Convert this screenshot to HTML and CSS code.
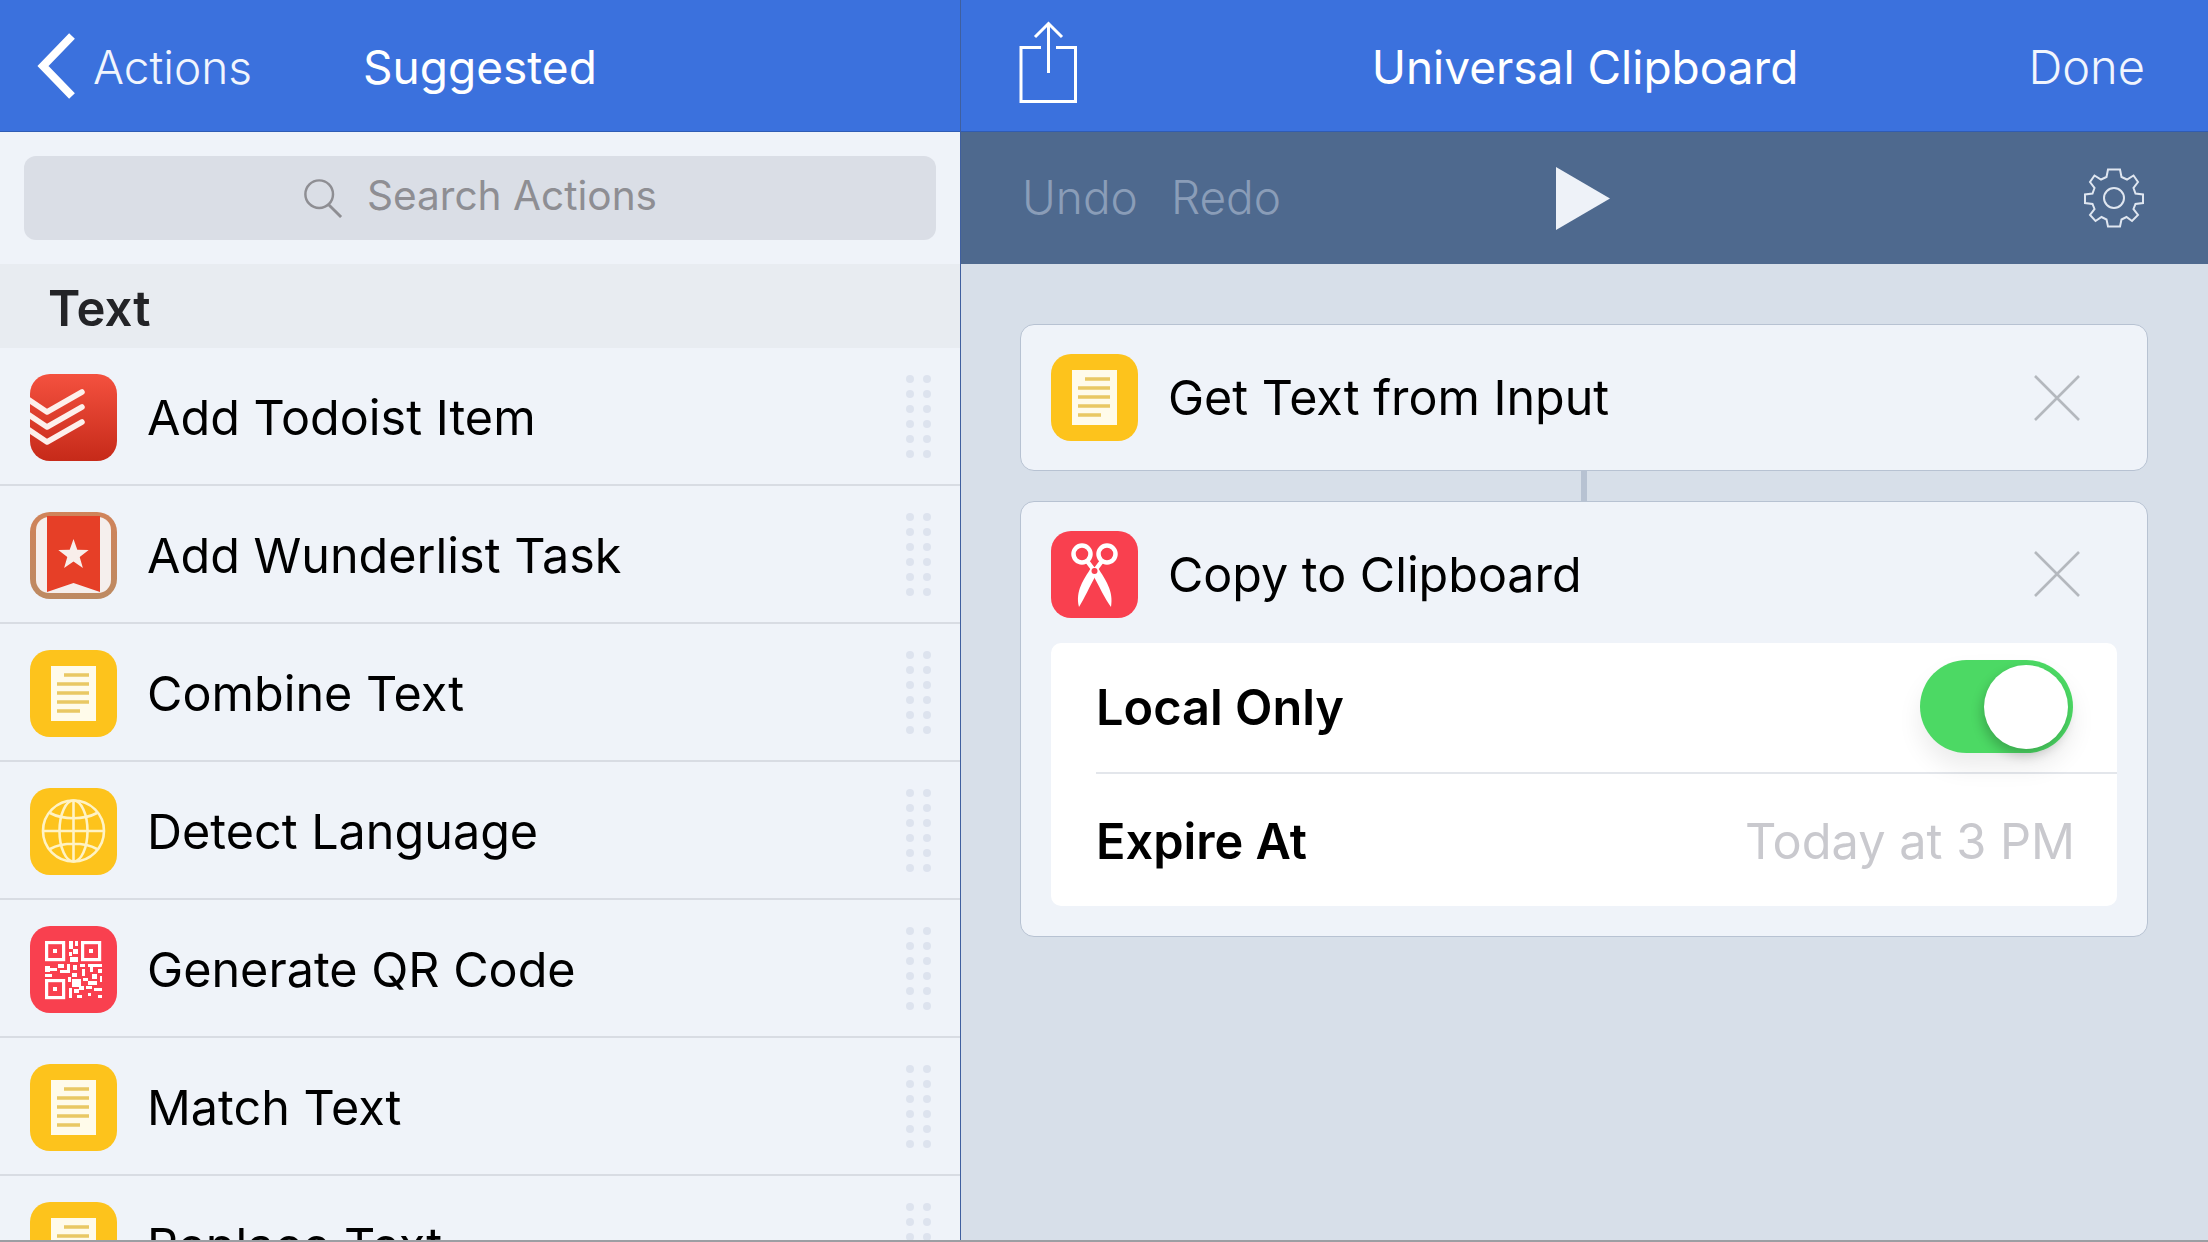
FILE: index.html
```html
<!DOCTYPE html>
<html lang="en">
<head>
<meta charset="utf-8">
<title>Universal Clipboard</title>
<link rel="stylesheet" href="styles.css">
</head>
<body>
<svg class="defs" width="0" height="0" aria-hidden="true">
  <defs>
    <symbol id="note" viewBox="0 0 87 87">
      <rect width="87" height="87" rx="20" fill="#fdc31c"/>
      <rect x="21" y="16" width="45" height="55" fill="#fffbea"/>
      <path d="M34 25H59M27 34H59M27 43H59M27 52H59M27 61H50" stroke="#e9c863" stroke-width="3.4" fill="none"/>
    </symbol>
    <symbol id="handle" viewBox="0 0 25 83">
      <g fill="#dde3ee">
        <rect x="0" y="0" width="8" height="8" rx="4"/><rect x="17" y="0" width="8" height="8" rx="4"/>
        <rect x="0" y="15" width="8" height="8" rx="4"/><rect x="17" y="15" width="8" height="8" rx="4"/>
        <rect x="0" y="30" width="8" height="8" rx="4"/><rect x="17" y="30" width="8" height="8" rx="4"/>
        <rect x="0" y="45" width="8" height="8" rx="4"/><rect x="17" y="45" width="8" height="8" rx="4"/>
        <rect x="0" y="60" width="8" height="8" rx="4"/><rect x="17" y="60" width="8" height="8" rx="4"/>
        <rect x="0" y="75" width="8" height="8" rx="4"/><rect x="17" y="75" width="8" height="8" rx="4"/>
      </g>
    </symbol>
    <symbol id="cross" viewBox="0 0 46 46">
      <path d="M1 1L45 45M45 1L1 45" stroke="#b4b8be" stroke-width="2.6" fill="none"/>
    </symbol>
    <linearGradient id="todo" x1="0" y1="0" x2="0" y2="1">
      <stop offset="0" stop-color="#f4513f"/><stop offset="1" stop-color="#c62a19"/>
    </linearGradient>
    <linearGradient id="wood" x1="0" y1="0" x2="0" y2="1">
      <stop offset="0" stop-color="#d0835a"/><stop offset="1" stop-color="#bd8a62"/>
    </linearGradient>
    <clipPath id="round"><rect width="87" height="87" rx="20"/></clipPath>
  </defs>
</svg>

<div class="app">
  <aside class="left">
    <header class="bar left-bar">
      <a class="back">
        <svg class="chevron" viewBox="0 0 40 66"><path d="M36 3L7 33L36 63" fill="none" stroke="#fff" stroke-width="8"/></svg>
        <span class="back-label">Actions</span>
      </a>
      <span class="bar-title">Suggested</span>
    </header>
    <div class="search-wrap">
      <div class="search">
        <svg class="search-icon" viewBox="0 0 42 42"><circle cx="17" cy="17" r="14.5" fill="none" stroke="#8e8e93" stroke-width="2.6"/><path d="M27 28L40 41" stroke="#8e8e93" stroke-width="3" fill="none"/></svg>
        <span class="search-text">Search Actions</span>
      </div>
    </div>
    <div class="section">Text</div>
    <ul class="list">
      <li class="row">
        <svg class="icon" viewBox="0 0 87 87"><g clip-path="url(#round)"><rect width="87" height="87" fill="url(#todo)"/><path d="M-4 24L17 38L52 18M-4 39L17 53L52 33M-4 54L17 68L52 48" fill="none" stroke="#fdf0ec" stroke-width="5.5" stroke-linecap="round" stroke-linejoin="round"/></g></svg>
        <span class="row-label">Add Todoist Item</span>
        <svg class="handle"><use href="#handle"/></svg>
      </li>
      <li class="row">
        <svg class="icon" viewBox="0 0 87 87"><g clip-path="url(#round)"><rect width="87" height="87" fill="url(#wood)"/><rect x="6" y="5" width="75" height="76" rx="13" fill="#f5efed"/><path d="M17 4H70V80L43.500 71L17 80Z" fill="#e63f27"/><path d="M43.500 27L47.300 37.700L58.700 38.100L49.700 45L52.900 55.900L43.500 49.500L34.100 55.900L37.300 45L28.300 38.100L39.700 37.700Z" fill="#f8eeea"/></g></svg>
        <span class="row-label">Add Wunderlist Task</span>
        <svg class="handle"><use href="#handle"/></svg>
      </li>
      <li class="row">
        <svg class="icon"><use href="#note"/></svg>
        <span class="row-label">Combine Text</span>
        <svg class="handle"><use href="#handle"/></svg>
      </li>
      <li class="row">
        <svg class="icon" viewBox="0 0 87 87"><rect width="87" height="87" rx="20" fill="#fdc31c"/><g fill="none" stroke="#fff3c4" stroke-width="2.600"><circle cx="43.500" cy="43" r="30.500"/><ellipse cx="43.500" cy="43" rx="14" ry="30.500"/><path d="M43.500 12.500V73.500M13 43H74M20 25C33 32 54 32 67 25M20 61C33 54 54 54 67 61"/></g></svg>
        <span class="row-label">Detect Language</span>
        <svg class="handle"><use href="#handle"/></svg>
      </li>
      <li class="row">
        <svg class="icon" viewBox="0 0 87 87"><rect width="87" height="87" rx="20" fill="#f9404f"/><g fill="none" stroke="#fff" stroke-width="3.200"><rect x="16.600" y="16.600" width="17" height="17"/><rect x="52.600" y="16.600" width="17" height="17"/><rect x="16.600" y="54.600" width="17" height="17"/></g><path fill="#fff" d="M23 23h4v4h-4zM59 23h4v4h-4zM23 61h4v4h-4zM39 15h4v8h-4zM45 15h3v5h-3zM39 26h3v4h-3zM43 23h5v5h-5zM40 31h8v5h-8zM15 40h5v6h-5zM20 42h7v3h-7zM28 38h6v4h-6zM30 44h10v3h-10zM37 38h3v6h-3zM43 39h4v5h-4zM50 38h5v3h-5zM58 38h14v3h-14zM52 43h3v7h-3zM60 41h3v5h-3zM68 43h4v4h-4zM42 47h5v4h-5zM15 48h7v3h-7zM38 51h3v5h-3zM42 53h9v8h-9zM53 52h5v3h-5zM62 48h5v5h-5zM70 50h2v6h-2zM58 55h9v4h-9zM49 60h5v4h-5zM39 62h3v10h-3zM44 63h5v4h-5zM56 60h6v3h-6zM64 62h8v3h-8zM47 69h5v3h-5zM58 67h3v3h-3zM68 69h4v3h-4z"/></svg>
        <span class="row-label">Generate QR Code</span>
        <svg class="handle"><use href="#handle"/></svg>
      </li>
      <li class="row">
        <svg class="icon"><use href="#note"/></svg>
        <span class="row-label">Match Text</span>
        <svg class="handle"><use href="#handle"/></svg>
      </li>
      <li class="row">
        <svg class="icon"><use href="#note"/></svg>
        <span class="row-label">Replace Text</span>
        <svg class="handle"><use href="#handle"/></svg>
      </li>
    </ul>
  </aside>

  <main class="right">
    <header class="bar right-bar">
      <svg class="share" viewBox="0 0 58 82"><g fill="none" stroke="#fff" stroke-width="3"><path d="M22 26.500H2V80.500H56.500V26.500H37"/><path d="M29.500 52V3M16 16L29.500 2.500L43 16"/></g></svg>
      <span class="bar-title doc-title">Universal Clipboard</span>
      <span class="done">Done</span>
    </header>
    <div class="toolbar">
      <div class="history"><span>Undo</span><span>Redo</span></div>
      <svg class="play" viewBox="0 0 54 63"><path d="M0 0L54 31.500L0 63Z" fill="#eef2f8"/></svg>
      <svg class="gear" viewBox="0 0 60 60"><g fill="none" stroke="#dfe6f0" stroke-width="2"><path d="M24 1.500H36L37.500 9L43 11.500L49.500 7.500L54 14L49.500 20L51.500 25.500L59 26.500V35L51.500 36L49.500 41L54 47L48 53L42.500 49L37.500 51.500L36 58.500H24L22.500 51.500L17.500 49L11.500 53L6 47L10.500 41L8.500 36L1 35V26.500L8.500 25.500L10.500 20L6 14L10.500 7.500L17 11.500L22.500 9Z"/><circle cx="30" cy="30" r="10"/></g></svg>
    </div>
    <div class="canvas">
      <section class="card">
        <div class="card-head card-head-first">
          <svg class="icon"><use href="#note"/></svg>
          <span class="card-title">Get Text from Input</span>
          <svg class="close"><use href="#cross"/></svg>
        </div>
      </section>
      <div class="connector"></div>
      <section class="card">
        <div class="card-head">
          <svg class="icon" viewBox="0 0 87 87"><rect width="87" height="87" rx="20" fill="#f9404f"/><g fill="none" stroke="#fff" stroke-width="4.500"><circle cx="31" cy="23" r="8.500"/><circle cx="56" cy="23" r="8.500"/><path d="M36 30L42 38M51 30L45 38"/></g><path d="M40 37C33 48 24 60 28 76C33 68 39 55 45 44Z" fill="#fff"/><path d="M47 37C54 48 63 60 60 76C54 68 48 55 42 44Z" fill="#fff"/><circle cx="43.500" cy="40" r="3" fill="#f9404f"/></svg>
          <span class="card-title">Copy to Clipboard</span>
          <svg class="close"><use href="#cross"/></svg>
        </div>
        <div class="options">
          <div class="option option-first">
            <span class="option-label">Local Only</span>
            <div class="toggle"><div class="knob"></div></div>
          </div>
          <div class="option option-last">
            <span class="option-label">Expire At</span>
            <span class="option-value">Today at 3 PM</span>
          </div>
        </div>
      </section>
    </div>
  </main>
</div>
</body>
</html>
```

FILE: styles.css
```css
* { box-sizing: border-box; }
html, body { margin: 0; padding: 0; }
body {
  width: 2208px;
  height: 1242px;
  overflow: hidden;
  font-family: Inter, "Liberation Sans", sans-serif;
  color: #000;
  background: #d7dfe9;
}
.defs { position: absolute; }
.app {
  display: grid;
  grid-template-columns: 961px 1fr;
  height: 1242px;
  overflow: hidden;
  border-bottom: 2px solid #9c9ea3;
}
.left {
  display: flex;
  flex-direction: column;
  min-height: 0;
  overflow: hidden;
  background: #eff3f9;
  border-right: 1px solid #3f5f9f;
}
.bar {
  display: flex;
  align-items: center;
  height: 132px;
  flex: none;
  padding-top: 2px;
  background: #3b71dd;
  border-bottom: 1px solid #2f5cb4;
  color: #fff;
  font-size: 46px;
}
.left-bar { padding-left: 36px; }
.back { display: flex; align-items: center; width: 327px; }
.chevron { width: 40px; height: 66px; margin-right: 17px; margin-top: -2px; }
.back-label { font-weight: 300; color: #f1f5fd; }
.bar-title { font-weight: 400; }
.search-wrap { padding: 24px; flex: none; }
.search {
  display: flex;
  align-items: center;
  justify-content: center;
  height: 84px;
  gap: 24px;
  border-radius: 12px;
  background: #dadee6;
  color: #8e8e93;
  font-size: 40.6px;
}
.search-icon { width: 40px; height: 40px; }
.search-text { padding-bottom: 5px; }
.section {
  height: 84px;
  flex: none;
  padding-left: 48px;
  padding-top: 4px;
  display: flex;
  align-items: center;
  background: #e8ecf1;
  color: #232427;
  font-size: 49px;
  font-weight: 600;
}
.list { list-style: none; margin: 0; padding: 0; }
.row {
  display: flex;
  align-items: center;
  height: 138px;
  padding: 2px 29px 0 30px;
  border-bottom: 2px solid #d8dce3;
}
.icon { width: 87px; height: 87px; flex: none; }
.row-label { flex: 1; margin-left: 30px; font-size: 48.5px; }
.handle { width: 25px; height: 83px; flex: none; margin-top: -2px; }
.right { display: flex; flex-direction: column; min-width: 0; }
.right-bar {
  display: grid;
  grid-template-columns: 1fr auto 1fr;
  padding: 2px 63px 0 58px;
}
.doc-title { padding-left: 6px; }
.share { width: 58px; height: 82px; margin-top: -10px; }
.done { justify-self: end; font-weight: 300; font-size: 47px; color: #f1f5fd; }
.toolbar {
  display: grid;
  grid-template-columns: 1fr auto 1fr;
  align-items: center;
  height: 132px;
  flex: none;
  padding: 0 64px 0 61px;
  background: #4e698e;
  color: #8a9db8;
  font-size: 46px;
  font-weight: 300;
}
.history { display: flex; gap: 33px; padding-bottom: 2px; }
.play { width: 54px; height: 63px; }
.gear { width: 60px; height: 60px; justify-self: end; }
.canvas {
  flex: 1;
  display: flex;
  flex-direction: column;
  padding: 60px 60px 0 59px;
}
.card {
  border: 1px solid #b7c2d2;
  border-radius: 14px;
  background: #eff3f9;
  padding: 0 30px;
}
.card-head {
  display: flex;
  align-items: center;
  height: 144px;
}
.card-head-first { height: 145px; }
.card-title { flex: 1; margin-left: 30px; font-size: 48.4px; }
.close { width: 46px; height: 46px; margin-right: 37px; }
.connector { width: 6px; height: 30px; margin: 0 auto; background: #b7c2d2; }
.options {
  background: #fff;
  border-radius: 10px;
  margin-bottom: 30px;
  padding-left: 45px;
  margin-top: -3px;
}
.option {
  display: flex;
  align-items: center;
  justify-content: space-between;
  height: 131px;
  padding-right: 42px;
}
.option-first { border-bottom: 2px solid #e3e6eb; }
.option-last { height: 132px; padding-top: 2px; }
.option-label { font-size: 48.700px; font-weight: 600; }
.option-value { font-size: 48.7px; color: #c9c9ce; }
.toggle {
  width: 153px;
  height: 93px;
  margin: 0 2px 2px 0;
  border-radius: 47px;
  background: #4cd964;
  position: relative;
  box-shadow: 0 14px 24px rgba(0,0,0,.08);
}
.knob {
  position: absolute;
  right: 5px;
  top: 5px;
  width: 84px;
  height: 84px;
  border-radius: 50%;
  background: #fff;
  box-shadow: -2px 6px 12px rgba(0,0,0,.22);
}
```
